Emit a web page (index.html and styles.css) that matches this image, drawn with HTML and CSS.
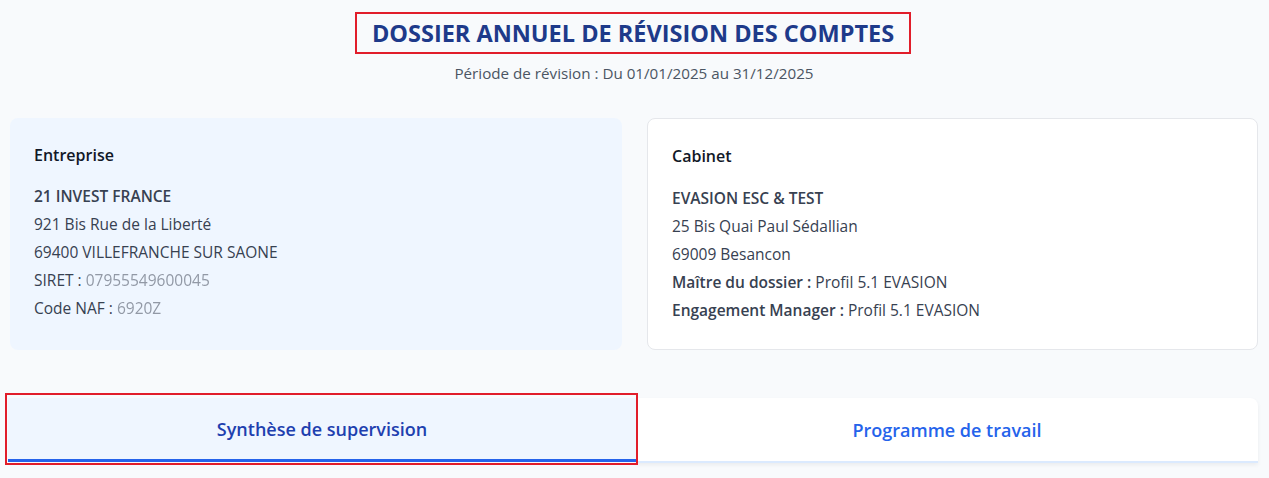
FILE: index.html
```html
<!DOCTYPE html>
<html lang="fr">
<head>
<meta charset="utf-8">
<link rel="stylesheet" href="styles.css">
</head>
<body>
<div class="page">
  <header class="head">
    <h1 class="title">DOSSIER ANNUEL DE RÉVISION DES COMPTES</h1>
    <p class="period">Période de révision : Du 01/01/2025 au 31/12/2025</p>
  </header>
  <section class="cards">
    <div class="card card-blue">
      <h2 class="card-title">Entreprise</h2>
      <div class="lines">
        <div class="line strong">21 INVEST FRANCE</div>
        <div class="line">921 Bis Rue de la Liberté</div>
        <div class="line">69400 VILLEFRANCHE SUR SAONE</div>
        <div class="line">SIRET : <span class="blur">07955549600045</span></div>
        <div class="line">Code NAF : <span class="blur">6920Z</span></div>
      </div>
    </div>
    <div class="card card-white">
      <h2 class="card-title">Cabinet</h2>
      <div class="lines">
        <div class="line strong">EVASION ESC &amp; TEST</div>
        <div class="line">25 Bis Quai Paul Sédallian</div>
        <div class="line">69009 Besancon</div>
        <div class="line"><b>Maître du dossier :</b> Profil 5.1 EVASION</div>
        <div class="line"><b>Engagement Manager :</b> Profil 5.1 EVASION</div>
      </div>
    </div>
  </section>
  <nav class="tabs">
    <div class="tab tab-active">Synthèse de supervision</div>
    <div class="tab tab-idle">Programme de travail</div>
  </nav>
</div>
</body>
</html>
```
FILE: styles.css
```css
* { box-sizing: border-box; }
html, body { margin: 0; padding: 0; }
body {
  background: #f8fafc;
  font-family: "Open Sans", "Noto Sans", sans-serif;
  color: #374151;
  height: 478px;
  overflow: hidden;
}
.page {
  padding: 12px 11px 0 10px;
}
.head {
  display: flex;
  flex-direction: column;
  align-items: center;
}
.title {
  margin: 0 0 0 -2px;
  border: 2px solid #e11d2a;
  padding: 5px 15px 5px;
  font-size: 23.5px;
  font-weight: 700;
  color: #1e3a8a;
  line-height: 28px;
  letter-spacing: 0;
}
.period {
  margin: 9px 0 0;
  font-size: 15.2px;
  line-height: 20px;
  color: #4b5563;
}
.cards {
  margin-top: 35px;
  display: grid;
  grid-template-columns: 612px 1fr;
  gap: 25px;
}
.card {
  border-radius: 8px;
  height: 232px;
  padding: 24px 24px;
}
.card-blue { background: #eff6ff; }
.card-white { background: #ffffff; border: 1px solid #e5e7eb; }
.card-title {
  margin: 0 0 15px;
  font-size: 16px;
  font-weight: 600;
  color: #111827;
  line-height: 26px;
}
.card-blue .card-title { margin-bottom: 14px; }
.lines .line {
  font-size: 15.5px;
  line-height: 28px;
  color: #374151;
  white-space: nowrap;
}
.line.strong, .line b { font-weight: 600; }
.blur { filter: blur(0.7px); color: #6b7280; opacity: 0.7; }
.tabs {
  margin: 48px 0 0 -2px;
  display: grid;
  grid-template-columns: 628px 1fr;
}
.tab {
  height: 65px;
  display: flex;
  align-items: center;
  justify-content: center;
  font-size: 18px;
  font-weight: 600;
}
.tab-active {
  position: relative;
  background: #eff6ff;
  color: #1e40af;
  border-bottom: 3px solid #2563eb;
  height: 64px;
  margin-bottom: 1px;
  padding-top: 1px;
}
.tab-active::after {
  content: "";
  position: absolute;
  top: -5px;
  left: -3px;
  right: -2px;
  bottom: -6px;
  border: 2px solid #e11d2a;
  pointer-events: none;
}
.tab-idle {
  background: #ffffff;
  color: #2563eb;
  border-bottom: 2px solid #dbeafe;
  border-top-right-radius: 8px;
  box-shadow: 0 2px 4px rgba(0,0,0,0.06);
}
```
